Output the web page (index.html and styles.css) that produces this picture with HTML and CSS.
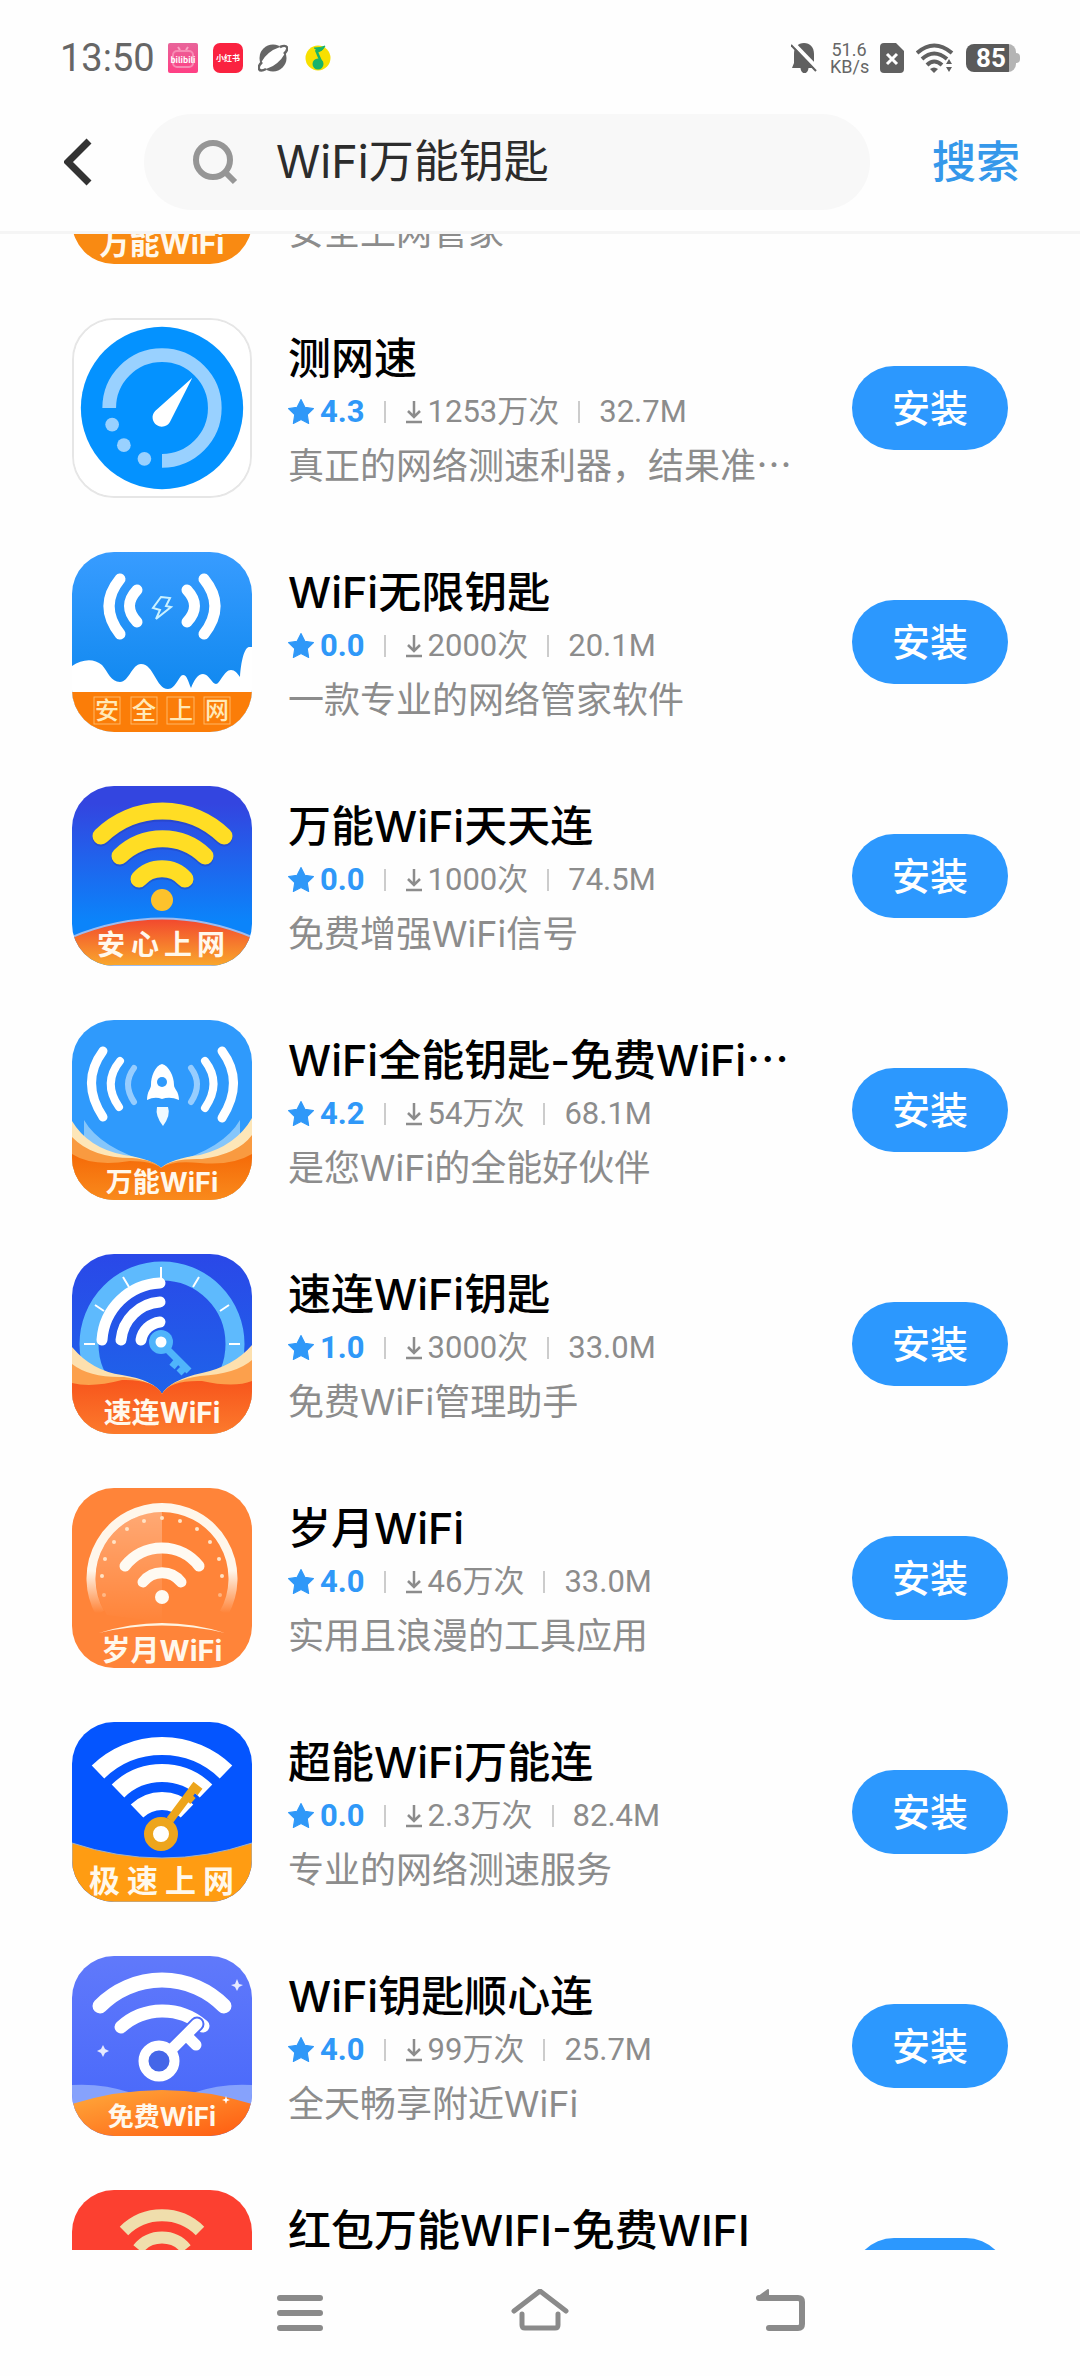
FILE: index.html
```html
<!DOCTYPE html>
<html lang="zh-CN">
<head>
<meta charset="utf-8">
<meta name="viewport" content="width=device-width, initial-scale=1">
<title>WiFi万能钥匙</title>
<link rel="stylesheet" href="styles.css">
</head>
<body>
<svg class="defs" width="0" height="0" aria-hidden="true">
  <defs>
    <symbol id="star" viewBox="0 0 24 24"><path d="M12 0.500 15.600 7.600 23.500 8.900 17.800 14.500 19.100 22.600 12 19 4.900 22.600 6.200 14.500 0.500 8.900 8.400 7.600Z" fill="#2f98f8" stroke="#2f98f8" stroke-linejoin="round"/></symbol>
    <symbol id="down" viewBox="0 0 18 24"><path d="M9 1V17M3 11 9 17 15 11M1 22H17" fill="none" stroke="#8c8c8c" stroke-width="2.500"/></symbol>
    <linearGradient id="blueA" x2="0" y2="1"><stop offset="0" stop-color="#389cff"/><stop offset=".75" stop-color="#1189f0"/></linearGradient>
    <linearGradient id="blueB" x2="0" y2="1"><stop offset=".1" stop-color="#3345e0"/><stop offset=".75" stop-color="#0b84fa"/></linearGradient>
    <linearGradient id="hotA" x2="0" y2="1"><stop offset="0" stop-color="#f2472e"/><stop offset="1" stop-color="#f9a82c"/></linearGradient>
    <linearGradient id="hotB" x2="0" y2="1"><stop offset="0" stop-color="#f56a08"/><stop offset="1" stop-color="#f98a1c"/></linearGradient>
    <linearGradient id="hotC" x2="0" y2="1"><stop offset="0" stop-color="#f7551c"/><stop offset="1" stop-color="#fc7a2c"/></linearGradient>
    <linearGradient id="hotD" x2="1" y2="1"><stop offset="0" stop-color="#ffab3c"/><stop offset="1" stop-color="#ff5a10"/></linearGradient>
    <linearGradient id="blueC" x2="0" y2="1"><stop offset="0" stop-color="#2a48e8"/><stop offset="1" stop-color="#1b6bea"/></linearGradient>
    <linearGradient id="blueD" x2="0" y2="1"><stop offset="0" stop-color="#6079fb"/><stop offset="1" stop-color="#4566fa"/></linearGradient>
    <linearGradient id="dial" x2="0" y2="1"><stop offset=".6" stop-color="#fff6ea"/><stop offset="1" stop-color="#fff6ea" stop-opacity="0"/></linearGradient>
    <linearGradient id="half" x2="0" y2="1"><stop offset="0" stop-color="#fff" stop-opacity=".3"/><stop offset="1" stop-color="#fff" stop-opacity="0"/></linearGradient>
    <linearGradient id="pink" x2="0" y2="1"><stop offset="0" stop-color="#e8649a"/><stop offset="1" stop-color="#ff3f84"/></linearGradient>
  </defs>
</svg>

<div class="status">
  <time class="clock">13:50</time>
  <svg class="mark" viewBox="0 0 30 30" aria-hidden="true"><rect width="30" height="30" rx="2" fill="url(#pink)"/><path d="M10 4 12 7M20 4 18 7" stroke="#f9a5c5" stroke-width="2"/><rect x="5" y="8" width="20" height="16" rx="4" fill="none" stroke="#f78bb4" stroke-width="2"/><text x="15" y="20" class="tiny">bilibili</text></svg>
  <svg class="mark" viewBox="0 0 30 30" aria-hidden="true"><rect width="30" height="30" rx="7" fill="#fa2240"/><text x="15" y="18" class="tiny">小红书</text></svg>
  <svg class="mark" viewBox="0 0 30 30" aria-hidden="true"><circle cx="15" cy="15" r="13.500" fill="#666"/><ellipse cx="15" cy="15" rx="15" ry="6.500" transform="rotate(-40 15 15)" fill="#fff"/><path d="M22 4C29 1 32 5 26 11M4 19C-2 25 1 30 8 26" fill="none" stroke="#666" stroke-width="2.500"/></svg>
  <svg class="mark" viewBox="0 0 30 30" aria-hidden="true"><circle cx="15" cy="15" r="12.500" fill="#f8e000"/><path d="M11 5Q18 5 22 3 20 8 15 9" fill="#17b36b" stroke="#17b36b" stroke-width="1"/><path d="M13 7 19 21" stroke="#17b36b" stroke-width="2.500"/><circle cx="15" cy="21" r="5.500" fill="#17b36b"/></svg>
  <div class="status-end">
    <svg width="27" height="30" viewBox="0 0 27 30" aria-hidden="true"><path d="M3 11C3 4 7 0 13 0S23 4 23 11V20L26 24V25H17.500C17 32 10 32 9.500 25H1L3 20Z" fill="#606060"/><path d="M2 0 27 26" stroke="#fff" stroke-width="4"/><path d="M0 2 25 28" stroke="#606060" stroke-width="2"/></svg>
    <div class="speed"><span>51.6</span><span>KB/s</span></div>
    <svg width="24" height="30" viewBox="0 0 24 30" aria-hidden="true"><path d="M4 0H16L24 8V26Q24 30 20 30H4Q0 30 0 26V4Q0 0 4 0Z" fill="#606060"/><path d="M7 11 17 21M17 11 7 21" stroke="#fff" stroke-width="3"/></svg>
    <svg width="38" height="30" viewBox="0 0 38 30" aria-hidden="true"><g fill="none" stroke="#606060" stroke-width="4"><path d="M1 10Q18 -5 36 10"/><path d="M6 16Q18 5 31 16"/><path d="M11 22Q18 15 26 22"/></g><path d="M14 26Q18 23 22 26L18 30Z" fill="#606060"/><path d="M33 14 39 22H27ZM33 31 39 23H27Z" fill="#fff"/><path d="M33 16 36 21H30ZM33 29 36 24H30Z" fill="#606060"/></svg>
    <div class="battery">85</div>
  </div>
</div>

<header class="top">
  <button class="back" type="button" aria-label="返回"><svg width="28" height="48" viewBox="0 0 28 48" aria-hidden="true"><path d="M25 3 4 24 25 45" fill="none" stroke="#333" stroke-width="7"/></svg></button>
  <label class="search">
    <svg width="46" height="46" viewBox="0 0 46 46" aria-hidden="true"><circle cx="21" cy="21" r="17" fill="none" stroke="#969696" stroke-width="6"/><path d="M32 32 43 43" stroke="#969696" stroke-width="6"/></svg>
    <input type="text" value="WiFi万能钥匙" aria-label="搜索应用">
  </label>
  <button class="go" type="button">搜索</button>
</header>

<main class="results">
  <ul class="list">
    <li class="app">
      <svg class="icon" viewBox="0 0 180 180" aria-hidden="true"><rect width="180" height="180" fill="#f98a12"/><text x="90" y="170" class="cap" font-size="30">万能WiFi</text></svg>
      <div class="info"><h2>WiFi钥匙</h2><p class="meta"><svg width="26" height="26"><use href="#star"/></svg><b>4.0</b></p><p class="desc">安全上网管家</p></div>
      <button class="install" type="button">安装</button>
    </li>
    <li class="app">
      <svg class="icon icon-line" viewBox="0 0 180 180" aria-hidden="true"><rect width="180" height="180" fill="#fff"/><circle cx="90" cy="90" r="83" fill="#0492ff"/><path d="M36 90A54 54 0 1 1 90 144" fill="none" stroke="#99d1ff" stroke-width="14"/><g fill="#99d1ff"><circle cx="39" cy="107" r="7"/><circle cx="51" cy="128" r="7"/><circle cx="72" cy="142" r="7"/></g><path d="M121 59 98.500 103.500A9.500 9.500 0 1 1 83 93Z" fill="#fff"/></svg>
      <div class="info"><h2>测网速</h2><p class="meta"><svg width="26" height="26"><use href="#star"/></svg><b>4.3</b><i></i><svg width="18" height="24"><use href="#down"/></svg><span>1253万次</span><i></i><span>32.7M</span></p><p class="desc">真正的网络测速利器，结果准<span class="dots">…</span></p></div>
      <button class="install" type="button">安装</button>
    </li>
    <li class="app">
      <svg class="icon" viewBox="0 0 180 180" aria-hidden="true"><rect width="180" height="180" fill="url(#blueA)"/><g fill="none" stroke="#fff" stroke-width="11" stroke-linecap="round"><path d="M48 27Q26 54 48 82"/><path d="M65 38Q50 54 65 70"/><path d="M115 38Q130 54 115 70"/><path d="M132 27Q154 54 132 82"/></g><path d="M89 45 98 46 94 54 99 55 84 67 88 58 81 56Z" fill="none" stroke="#c9f1ff" stroke-width="2"/><path d="M0 114C10 107 22 106 30 113 36 120 39 130 48 130S60 112 69 112C82 112 84 137 96 137 104 137 107 123 111 123S116 129 119 136C122 128 126 122 131 122 137 122 140 132 144 132S152 118 159 118C163 118 165 121 168 125 169 110 172 96 177 95H180V180H0Z" fill="#fff"/><rect y="140" width="180" height="40" fill="#fb7d08"/><g fill="none" stroke="#ffb765" stroke-width="1"><rect x="22" y="145" width="26" height="27"/><rect x="59" y="145" width="26" height="27"/><rect x="95" y="145" width="27" height="27"/><rect x="132" y="145" width="26" height="27"/></g><text x="23 60 97 133" y="167" class="seal">安全上网</text></svg>
      <div class="info"><h2>WiFi无限钥匙</h2><p class="meta"><svg width="26" height="26"><use href="#star"/></svg><b>0.0</b><i></i><svg width="18" height="24"><use href="#down"/></svg><span>2000次</span><i></i><span>20.1M</span></p><p class="desc">一款专业的网络管家软件</p></div>
      <button class="install" type="button">安装</button>
    </li>
    <li class="app">
      <svg class="icon" viewBox="0 0 180 180" aria-hidden="true"><rect width="180" height="180" fill="url(#blueB)"/><g fill="none" stroke-linecap="round" stroke="#2340b4" stroke-opacity=".45" stroke-width="17" transform="translate(0 2)"><path d="M29 50A88 88 0 0 1 152 50"/><path d="M48 70A61 61 0 0 1 133 70"/><path d="M67 93A31 31 0 0 1 113 93"/></g><g fill="none" stroke-linecap="round" stroke="#ffdd24" stroke-width="17"><path d="M29 50A88 88 0 0 1 152 50"/><path d="M48 70A61 61 0 0 1 133 70"/><path d="M67 93A31 31 0 0 1 113 93"/></g><circle cx="90" cy="114" r="11" fill="#fdc22c"/><path d="M0 151Q90 114 180 151V180H0Z" fill="url(#hotA)" stroke="#9cbcf0" stroke-width="2"/><text x="25 59 92 125" y="169" class="cap-left" font-size="28">安心上网</text></svg>
      <div class="info"><h2>万能WiFi天天连</h2><p class="meta"><svg width="26" height="26"><use href="#star"/></svg><b>0.0</b><i></i><svg width="18" height="24"><use href="#down"/></svg><span>1000次</span><i></i><span>74.5M</span></p><p class="desc">免费增强WiFi信号</p></div>
      <button class="install" type="button">安装</button>
    </li>
    <li class="app">
      <svg class="icon" viewBox="0 0 180 180" aria-hidden="true"><rect width="180" height="180" fill="#2f9afc"/><g fill="none" stroke="#fff" stroke-linecap="round"><path d="M31 31Q8 62 31 97" stroke-width="9"/><path d="M48 41Q30 63 47 87" stroke-width="8"/><path d="M62 48Q50 64 62 82" stroke-width="6" opacity=".5"/><path d="M119 48Q131 64 119 82" stroke-width="6" opacity=".5"/><path d="M133 41Q150 63 133 88" stroke-width="8"/><path d="M150 31Q173 62 150 98" stroke-width="9"/></g><path d="M90 44C83 46 79 56 79 65 79 69 75 71 75 80Q83 76 90 79 98 76 107 80C107 71 102 69 102 65 102 56 97 46 90 44Z" fill="#fff"/><circle cx="90" cy="62" r="5" fill="#2f9afc"/><path d="M85 87H96Q99 95 91 106 83 96 85 87Z" fill="#f0faff"/><path d="M12 100Q28 128 80 143L12 128ZM168 100Q152 128 100 143L168 128Z" fill="#a9d8fb" opacity=".7"/><path d="M0 101Q16 128 52 135 80 139 89 148 98 139 128 135 164 126 180 98V180H0Z" fill="#fde6b8"/><path d="M0 117Q20 138 60 138 82 140 89 148 100 138 130 139 166 134 180 115V180H0Z" fill="#f99a40"/><path d="M0 134Q20 147 58 141 80 141 89 148 100 140 128 143 160 146 180 134V180H0Z" fill="url(#hotB)"/><text x="90" y="172" class="cap" font-size="27">万能WiFi</text></svg>
      <div class="info"><h2>WiFi全能钥匙-免费WiFi<span class="dots">…</span></h2><p class="meta"><svg width="26" height="26"><use href="#star"/></svg><b>4.2</b><i></i><svg width="18" height="24"><use href="#down"/></svg><span>54万次</span><i></i><span>68.1M</span></p><p class="desc">是您WiFi的全能好伙伴</p></div>
      <button class="install" type="button">安装</button>
    </li>
    <li class="app">
      <svg class="icon" viewBox="0 0 180 180" aria-hidden="true"><rect width="180" height="180" fill="url(#blueC)"/><circle cx="90" cy="90" r="73" fill="none" stroke="#5ebafd" stroke-width="19"/><path d="M89 13V24M127 23 121 33M157 51 148 57M168 90H157M23 90H12M32 57 23 51M57 33 51 23" stroke="#fff" stroke-width="2"/><g fill="none" stroke="#fff" stroke-width="11" stroke-linecap="round"><path d="M30 86A61 61 0 0 1 88 29"/><path d="M49 86A42 42 0 0 1 88 48"/><path d="M69 86A22 22 0 0 1 88 68"/></g><path d="M95 95 117 117M106 106 100 113M113 113 107 119" stroke="#4fb4fb" stroke-width="7"/><circle cx="89" cy="88" r="12" fill="#4fb4fb"/><circle cx="89" cy="88" r="5.500" fill="#fff"/><path d="M0 93Q20 117 50 121 82 126 90 140 98 126 130 119 162 112 180 91V180H0Z" fill="#fde0ae"/><path d="M0 110Q18 124 52 123 82 127 90 140 98 126 128 122 164 120 180 106V180H0Z" fill="#fca04c"/><path d="M0 129Q20 134 50 126 82 125 90 140 98 126 130 127 162 134 180 127V180H0Z" fill="url(#hotC)"/><text x="90" y="169" class="cap" font-size="28">速连WiFi</text></svg>
      <div class="info"><h2>速连WiFi钥匙</h2><p class="meta"><svg width="26" height="26"><use href="#star"/></svg><b>1.0</b><i></i><svg width="18" height="24"><use href="#down"/></svg><span>3000次</span><i></i><span>33.0M</span></p><p class="desc">免费WiFi管理助手</p></div>
      <button class="install" type="button">安装</button>
    </li>
    <li class="app">
      <svg class="icon" viewBox="0 0 180 180" aria-hidden="true"><rect width="180" height="180" fill="#ff8439"/><path d="M90 24A66 66 0 0 0 35 127L90 134Z" fill="url(#half)"/><path d="M28 125A71 71 0 1 1 152 125" fill="none" stroke="url(#dial)" stroke-width="9"/><g fill="#ffe3c6"><circle cx="90" cy="30" r="2"/><circle cx="72" cy="33" r="2"/><circle cx="108" cy="33" r="2"/><circle cx="55" cy="41" r="2"/><circle cx="125" cy="41" r="2"/><circle cx="42" cy="54" r="2"/><circle cx="138" cy="54" r="2"/><circle cx="33" cy="71" r="2"/><circle cx="147" cy="71" r="2"/><circle cx="30" cy="88" r="2"/><circle cx="150" cy="88" r="2"/><circle cx="32" cy="107" r="2" opacity=".5"/><circle cx="148" cy="107" r="2" opacity=".5"/></g><g fill="none" stroke="#fffaf2" stroke-width="11" stroke-linecap="round"><path d="M53 78A47 47 0 0 1 127 78"/><path d="M71 94A24 24 0 0 1 109 94"/></g><circle cx="90" cy="109" r="7" fill="#fffaf2"/><path d="M27 145Q90 125 153 145 90 130 27 145Z" fill="#fff3e0"/><text x="90" y="173" class="cap" font-size="29">岁月WiFi</text></svg>
      <div class="info"><h2>岁月WiFi</h2><p class="meta"><svg width="26" height="26"><use href="#star"/></svg><b>4.0</b><i></i><svg width="18" height="24"><use href="#down"/></svg><span>46万次</span><i></i><span>33.0M</span></p><p class="desc">实用且浪漫的工具应用</p></div>
      <button class="install" type="button">安装</button>
    </li>
    <li class="app">
      <svg class="icon" viewBox="0 0 180 180" aria-hidden="true"><rect width="180" height="180" fill="#0455ff"/><g fill="none" stroke="#fff" stroke-width="18"><path d="M26 50A92 92 0 0 1 154 50"/><path d="M46 69A63 63 0 0 1 134 69"/><path d="M65 89A36 36 0 0 1 115 89"/></g><path d="M98 98 122 66M113 72 121 79M119 63 128 70" stroke="#eda51c" stroke-width="8"/><circle cx="89" cy="112" r="12.500" fill="#fff" stroke="#eda51c" stroke-width="9"/><path d="M0 121Q90 151 180 121V180H0Z" fill="#ff9c12" stroke="#9db0c8" stroke-width="1"/><text x="17 55 93 131" y="170" class="cap-left" font-size="31">极速上网</text></svg>
      <div class="info"><h2>超能WiFi万能连</h2><p class="meta"><svg width="26" height="26"><use href="#star"/></svg><b>0.0</b><i></i><svg width="18" height="24"><use href="#down"/></svg><span>2.3万次</span><i></i><span>82.4M</span></p><p class="desc">专业的网络测速服务</p></div>
      <button class="install" type="button">安装</button>
    </li>
    <li class="app">
      <svg class="icon" viewBox="0 0 180 180" aria-hidden="true"><rect width="180" height="180" fill="url(#blueD)"/><g fill="none" stroke-linecap="round" stroke="#fff"><path d="M28 50A87 87 0 0 1 152 50" stroke-width="15"/><path d="M49 71A62 62 0 0 1 131 70" stroke-width="13"/><path d="M100 93 125 68" stroke="#4f6df8" stroke-width="15"/><path d="M100 93 125 68M115 80 124 89" stroke-width="11"/></g><circle cx="87" cy="105" r="15.500" fill="#4466e8" stroke="#fff" stroke-width="10"/><path d="M31 89 33 93 37 95 33 97 31 101 29 97 25 95 29 93ZM165 23 167 28 171 29 167 31 165 35 163 31 159 29 163 28Z" fill="#fff" opacity=".85"/><path d="M0 129Q30 127 60 137L0 160ZM180 129Q150 127 120 137L180 160Z" fill="#86a2fc"/><path d="M0 148Q90 120 180 148V180H0Z" fill="url(#hotD)"/><path d="M154 140 155 143 158 144 155 145 154 148 153 145 150 144 153 143Z" fill="#fff"/><text x="90" y="170" class="cap" font-size="26">免费WiFi</text></svg>
      <div class="info"><h2>WiFi钥匙顺心连</h2><p class="meta"><svg width="26" height="26"><use href="#star"/></svg><b>4.0</b><i></i><svg width="18" height="24"><use href="#down"/></svg><span>99万次</span><i></i><span>25.7M</span></p><p class="desc">全天畅享附近WiFi</p></div>
      <button class="install" type="button">安装</button>
    </li>
    <li class="app">
      <svg class="icon" viewBox="0 0 180 180" aria-hidden="true"><rect width="180" height="180" fill="#fc4030"/><g fill="none" stroke="#f0deac" stroke-width="12"><path d="M52 41A54 54 0 0 1 128 41"/><path d="M66 59A31 31 0 0 1 114 59"/></g></svg>
      <div class="info"><h2>红包万能WIFI-免费WIFI</h2></div>
      <button class="install" type="button" aria-label="安装"></button>
    </li>
  </ul>
</main>

<nav class="keys">
  <button type="button" aria-label="菜单"><svg width="60" height="48" viewBox="0 0 60 48" aria-hidden="true"><path d="M10 9H50M10 24H50M10 39H50" stroke="#8a8a8a" stroke-width="6" stroke-linecap="round"/></svg></button>
  <button type="button" aria-label="主页"><svg width="60" height="48" viewBox="0 0 60 48" aria-hidden="true"><path d="M4 22 30 2 56 22M12 25V36Q12 39 15 39H45Q48 39 48 36V25" fill="none" stroke="#8a8a8a" stroke-width="5" stroke-linecap="round"/></svg></button>
  <button type="button" aria-label="后退"><svg width="60" height="48" viewBox="0 0 60 48" aria-hidden="true"><path d="M9 9H48Q52 9 52 13V35Q52 39 48 39H19" fill="none" stroke="#8a8a8a" stroke-width="6" stroke-linecap="round"/><path d="M7 9 18 1V9Z" fill="#8a8a8a" stroke="#8a8a8a" stroke-width="2" stroke-linejoin="round"/></svg></button>
</nav>
</body>
</html>
```
FILE: styles.css
```css
* { box-sizing: border-box; }

body {
  margin: 0;
  height: 100vh;
  display: flex;
  flex-direction: column;
  background: #fefefe;
  color: #000;
  font-family: Inter, "Noto Sans CJK SC", sans-serif;
}

button {
  flex: none;
  border: 0;
  padding: 0;
  background: none;
  color: inherit;
  font-family: inherit;
}

svg { display: block; flex: none; }
.defs { position: absolute; }

.status {
  flex: none;
  display: flex;
  align-items: center;
  gap: 15px;
  height: 96px;
  padding: 20px 60px 0;
  color: #666;
  font-family: Roboto, sans-serif;
}
.clock { width: 93px; font-size: 38px; line-height: 40px; white-space: nowrap; }
.mark { width: 30px; height: 30px; }
.tiny {
  fill: #fff;
  font: 700 8px "Noto Sans CJK SC", sans-serif;
  text-anchor: middle;
}
.status-end {
  display: flex;
  align-items: center;
  gap: 12px;
  margin-left: auto;
}
.speed {
  display: flex;
  flex-direction: column;
  width: 38px;
  font-size: 18px;
  line-height: 17px;
  text-align: center;
}
.battery {
  position: relative;
  width: 50px;
  height: 28px;
  margin-right: 4px;
  border-radius: 8px;
  background: linear-gradient(90deg, #5a5a5a 43px, #b4b4b4 43px);
  color: #fff;
  font-size: 26px;
  font-weight: 700;
  line-height: 29px;
  text-align: center;
}
.battery::after {
  content: "";
  position: absolute;
  top: 9px;
  right: -4px;
  width: 4px;
  height: 10px;
  border-radius: 0 4px 4px 0;
  background: #b4b4b4;
}

.top {
  flex: none;
  display: flex;
  align-items: center;
  padding: 18px 60px 21px 64px;
  border-bottom: 3px solid #f5f5f5;
}
.back { width: 80px; }
.search {
  flex: 1;
  min-width: 0;
  display: flex;
  align-items: center;
  gap: 38px;
  height: 96px;
  padding: 0 48px;
  border-radius: 48px;
  background: #f8f8f8;
}
.search input {
  flex: 1;
  width: 100%;
  min-width: 0;
  border: 0;
  padding: 0;
  outline: 0;
  background: none;
  color: #2c2c2c;
  font: 400 45px/60px Inter, "Noto Sans CJK SC", sans-serif;
}
.go {
  margin-left: 62px;
  color: #3598ea;
  font-size: 44px;
  font-weight: 500;
  line-height: 60px;
  white-space: nowrap;
}

.results { flex: 1; min-height: 0; overflow: hidden; }
/* The list is shown scrolled part of the way through its first row. */
.list { list-style: none; margin: -177px 0 0; padding: 0; }
.app {
  display: flex;
  align-items: center;
  height: 234px;
  padding: 0 72px;
}
.icon { width: 180px; height: 180px; border-radius: 42px; overflow: hidden; }
.icon-line { border: 2px solid #e6e6e6; }
.cap, .cap-left {
  fill: #fff8ec;
  font-family: Inter, "Noto Sans CJK SC", sans-serif;
  font-weight: 700;
}
.cap { text-anchor: middle; }
.seal { fill: #ffe9b8; font: 500 24px "Noto Sans CJK SC", sans-serif; }

.info {
  flex: 1;
  min-width: 0;
  height: 170px;
  margin-left: 36px;
  padding-top: 8px;
  white-space: nowrap;
}
.info h2, .info p { height: 54px; margin: 0; line-height: 54px; }
.info h2 { font-size: 43px; font-weight: 500; }
.info .desc { color: #8c8c8c; font-size: 36px; }
.dots { font-family: "Noto Sans CJK SC", sans-serif; line-height: 1; }
.info .meta {
  display: flex;
  align-items: center;
  color: #8c8c8c;
  font-family: Roboto, "Noto Sans CJK SC", sans-serif;
  font-size: 31px;
}
.meta b { margin-left: 6px; color: #2f98f8; font-weight: 700; }
.meta i { width: 2px; height: 22px; margin: 0 19px; background: #ccc; }
.meta svg + span { margin-left: 5px; }

.install {
  width: 156px;
  height: 84px;
  border-radius: 42px;
  background: #2c98fe;
  color: #fff;
  font-size: 38px;
  font-weight: 500;
  line-height: 84px;
}

.keys {
  flex: none;
  display: flex;
  align-items: center;
  justify-content: center;
  gap: 180px;
  height: 126px;
}
```
